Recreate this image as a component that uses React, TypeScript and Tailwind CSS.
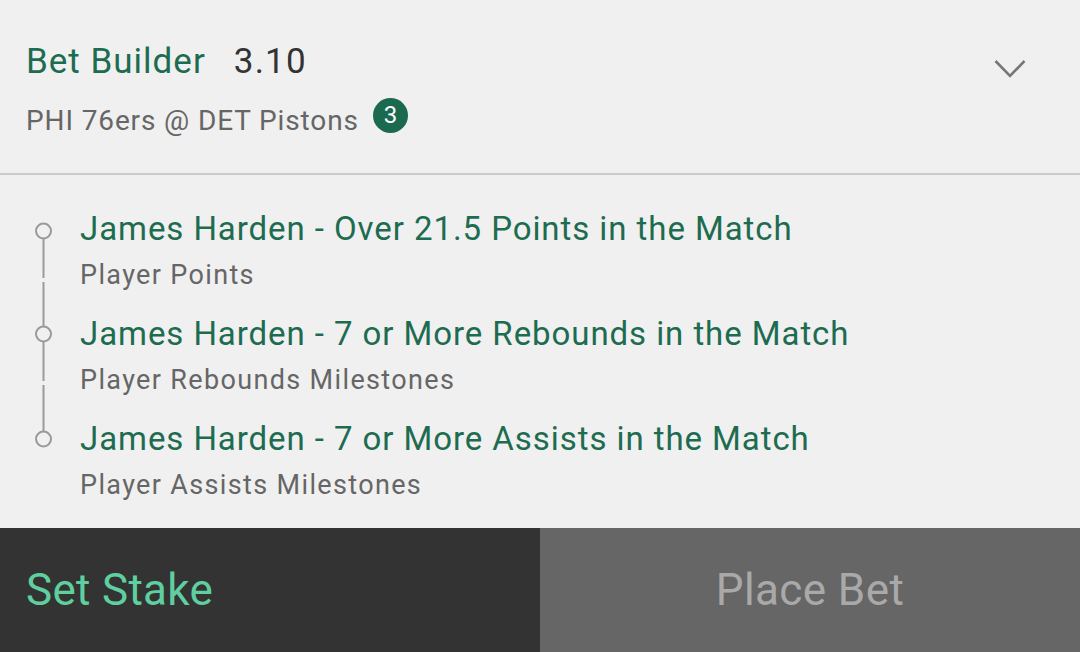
import React from "react";

const legs = [
  { title: "James Harden - Over 21.5 Points in the Match", sub: "Player Points" },
  { title: "James Harden - 7 or More Rebounds in the Match", sub: "Player Rebounds Milestones" },
  { title: "James Harden - 7 or More Assists in the Match", sub: "Player Assists Milestones" },
];

export default function App() {
  return (
    <div
      className="w-[1080px] h-[652px] bg-[#f0f0f0] flex flex-col overflow-hidden"
      style={{ fontFamily: "Roboto, 'Noto Sans', sans-serif" }}
    >
      {/* Header */}
      <div className="h-[173px] flex pl-[26px] pr-[54px] pt-[41px]">
        <div className="flex-1 flex flex-col">
          <div className="flex items-center h-[42px]">
            <span className="text-[35px] leading-[42px] tracking-[1px] text-[#1e6c50]">Bet Builder</span>
            <span className="text-[35px] leading-[42px] tracking-[1.2px] text-[#333333] ml-[28px]">3.10</span>
          </div>
          <div className="flex items-center h-[36px] mt-[20px]">
            <span className="text-[28px] leading-[36px] tracking-[0.87px] text-[#666666]">PHI 76ers @ DET Pistons</span>
            <span className="ml-[14px] w-[35px] h-[35px] rounded-full bg-[#1b6a4f] text-white text-[24px] leading-[35px] flex items-center justify-center mb-[12px]">
              3
            </span>
          </div>
        </div>
        <svg width="32" height="20" viewBox="0 0 32 20" className="mt-[18px]">
          <polyline points="1.5,2 16,17 30.5,2" fill="none" stroke="#777777" strokeWidth="2.6" />
        </svg>
      </div>
      <div className="h-[2px] bg-[#cbcbcb]" />

      {/* Legs */}
      <div className="flex pt-[33px] flex-1">
        <div className="w-[80px] shrink-0">
          <svg width="80" height="302" viewBox="0 0 80 302">
            <g fill="none" stroke="#9a9a9a" strokeWidth="2">
              <circle cx="43.5" cy="23" r="7.5" />
              <circle cx="43.5" cy="126" r="7.5" />
              <circle cx="43.5" cy="231" r="7.5" />
            </g>
            <g stroke="#9a9a9a" strokeWidth="2">
              <line x1="43.5" y1="31" x2="43.5" y2="70" />
              <line x1="43.5" y1="74" x2="43.5" y2="118" />
              <line x1="43.5" y1="134" x2="43.5" y2="173" />
              <line x1="43.5" y1="177" x2="43.5" y2="223" />
            </g>
          </svg>
        </div>
        <div className="flex flex-col gap-[13px]">
          {legs.map((l) => (
            <div key={l.title} className="flex flex-col">
              <div className="h-[42px] text-[33px] leading-[42px] tracking-[0.93px] text-[#1e6c50]">{l.title}</div>
              <div className="h-[50px] text-[27px] leading-[50px] tracking-[1.35px] text-[#666666]">{l.sub}</div>
            </div>
          ))}
        </div>
      </div>

      {/* Bottom bar */}
      <div className="h-[124px] flex shrink-0">
        <div className="w-[540px] bg-[#333333] flex items-center pl-[26px]">
          <span className="text-[44px] leading-[50px] tracking-[0.3px] text-[#5fcf9f]">Set Stake</span>
        </div>
        <div className="flex-1 bg-[#666666] flex items-center justify-center">
          <span className="text-[44px] leading-[50px] tracking-[0.4px] text-[#a9a9a9]">Place Bet</span>
        </div>
      </div>
    </div>
  );
}
